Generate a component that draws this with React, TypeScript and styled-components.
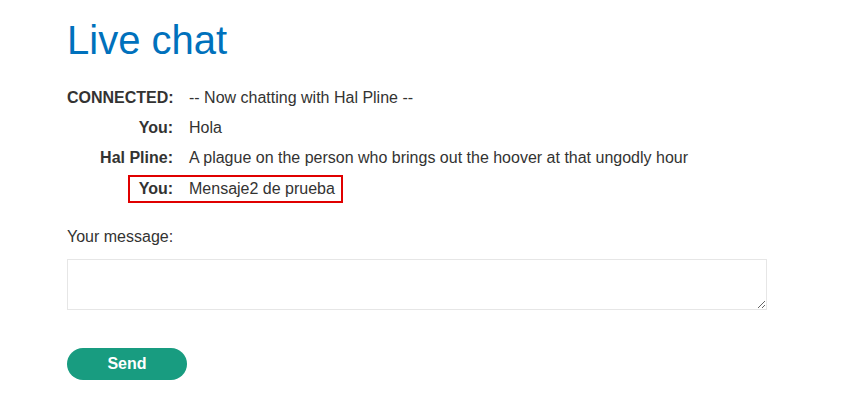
import React from "react";
import styled, { createGlobalStyle } from "styled-components";

const Global = createGlobalStyle`
  html, body { margin: 0; padding: 0; background: #fff; }
  body { font-family: "Liberation Sans", Arial, sans-serif; color: #333332; font-size: 16px; }
`;

const Page = styled.main`
  padding: 16px 0 0 67px;
  width: 700px;
`;

const Title = styled.h1`
  margin: 0;
  font-size: 40px;
  line-height: 48px;
  font-weight: 400;
  color: #0071bc;
`;

const ChatTable = styled.div`
  margin-top: 18.5px;
  display: flex;
  flex-direction: column;
`;

const Row = styled.div`
  display: flex;
  padding: 4px 0;
  line-height: 22.4px;
`;

const HighlightRow = styled.div`
  display: flex;
  padding: 1px 0;
  line-height: 22.4px;
`;

const Highlight = styled.div`
  display: inline-flex;
  margin-left: 61px;
  border: 2px solid #e00000;
  padding: 1px 6px 1px 0;
`;

const Label = styled.span<{ $w: number }>`
  width: ${(p) => p.$w}px;
  flex: none;
  text-align: right;
  font-weight: 700;
  margin-right: 16px;
`;

const Msg = styled.span``;

const FieldLabel = styled.label`
  display: block;
  margin-top: 21.4px;
  line-height: 22.4px;
`;

const Input = styled.textarea`
  display: block;
  box-sizing: border-box;
  margin-top: 11px;
  width: 700px;
  height: 51px;
  border: 1px solid #e6e6e6;
  border-radius: 0;
  font-family: inherit;
  font-size: 16px;
  padding: 4px;
  outline: none;
`;

const SendButton = styled.button`
  display: block;
  margin-top: 38px;
  width: 120px;
  height: 32px;
  border: none;
  border-radius: 16px;
  background: #189c80;
  color: #fff;
  font-family: "Liberation Sans", Arial, sans-serif;
  font-weight: 700;
  font-size: 16px;
  padding: 0;
  cursor: pointer;
`;

const messages = [
  { who: "CONNECTED:", text: "-- Now chatting with Hal Pline --" },
  { who: "You:", text: "Hola" },
  { who: "Hal Pline:", text: "A plague on the person who brings out the hoover at that ungodly hour" },
];

export default function App() {
  return (
    <>
      <Global />
      <Page>
        <Title>Live chat</Title>
        <ChatTable>
          {messages.map((m, i) => (
            <Row key={i}>
              <Label $w={106}>{m.who}</Label>
              <Msg>{m.text}</Msg>
            </Row>
          ))}
          <HighlightRow>
            <Highlight>
              <Label $w={43}>You:</Label>
              <Msg>Mensaje2 de prueba</Msg>
            </Highlight>
          </HighlightRow>
        </ChatTable>
        <FieldLabel>Your message:</FieldLabel>
        <Input />
        <SendButton>Send</SendButton>
      </Page>
    </>
  );
}
